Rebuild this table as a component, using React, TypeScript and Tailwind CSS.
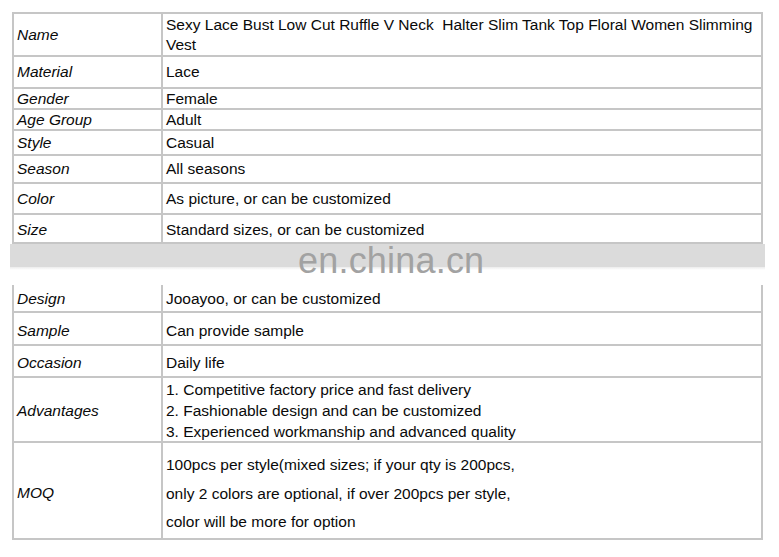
import React from "react";

type Row = {
  label: string;
  value: React.ReactNode;
  h: string;
  pad?: string;
};

const topRows: Row[] = [
  {
    label: "Name",
    value: (
      <span className="leading-[20px]">
        Sexy Lace Bust Low Cut Ruffle V Neck&nbsp; Halter Slim Tank Top Floral Women Slimming Vest
      </span>
    ),
    h: "h-[43px]",
  },
  { label: "Material", value: "Lace", h: "h-[32px]" },
  { label: "Gender", value: "Female", h: "h-[21px]" },
  { label: "Age Group", value: "Adult", h: "h-[21px]" },
  { label: "Style", value: "Casual", h: "h-[25px]" },
  { label: "Season", value: "All seasons", h: "h-[28px]" },
  { label: "Color", value: "As picture, or can be customized", h: "h-[31px]" },
  { label: "Size", value: "Standard sizes, or can be customized", h: "h-[27px]", pad: "pt-[3px]" },
];

const bottomRows: Row[] = [
  { label: "Design", value: "Jooayoo, or can be customized", h: "h-[28px]", pad: "pt-[2px]" },
  { label: "Sample", value: "Can provide sample", h: "h-[33px]", pad: "pt-[4px]" },
  { label: "Occasion", value: "Daily life", h: "h-[32px]", pad: "pt-[4px]" },
  {
    label: "Advantages",
    value: (
      <div className="leading-[21px]">
        <div>1. Competitive factory price and fast delivery</div>
        <div>2. Fashionable design and can be customized</div>
        <div>3. Experienced workmanship and advanced quality</div>
      </div>
    ),
    h: "h-[65px]",
    pad: "pt-[2px]",
  },
  {
    label: "MOQ",
    value: (
      <div className="leading-[28.5px] pt-[3px]">
        <div>100pcs per style(mixed sizes; if your qty is 200pcs,</div>
        <div>only 2 colors are optional, if over 200pcs per style,</div>
        <div>color will be more for option</div>
      </div>
    ),
    h: "h-[95px]",
    pad: "pt-[4px]",
  },
];

function SpecRow({ row, last }: { row: Row; last: boolean }) {
  const pad = row.pad ?? "";
  return (
    <div className={`flex ${row.h} ${last ? "" : "border-b-2 border-[#c6c6c6]"}`}>
      <div className={`w-[149px] shrink-0 border-r-2 border-[#c6c6c6] pl-[3px] flex items-center italic ${pad}`}>
        {row.label}
      </div>
      <div className={`flex-1 pl-[3px] pr-[2px] flex items-center ${pad}`}>{row.value}</div>
    </div>
  );
}

export default function App() {
  return (
    <div
      className="relative w-[779px] h-[557px] bg-white pt-[12px] text-[15.5px] leading-[18px] text-[#0a0a0a]"
      style={{ fontFamily: '"Liberation Sans", Arial, sans-serif' }}
    >
      <div className="ml-[12px] w-[751px] border-2 border-[#c6c6c6]">
        {topRows.map((r, i) => (
          <SpecRow key={r.label} row={r} last={i === topRows.length - 1} />
        ))}
      </div>

      {/* watermark strip */}
      <div className="ml-[10px] w-[755px] h-[23px] bg-[#dbdbdb]" />
      <div className="ml-[10px] w-[755px] h-[3px] bg-gradient-to-b from-[#ececec] to-white" />
      <div className="h-[15px]" />

      <div className="ml-[12px] w-[751px] border-x-2 border-b-2 border-[#c6c6c6]">
        {bottomRows.map((r, i) => (
          <SpecRow key={r.label} row={r} last={i === bottomRows.length - 1} />
        ))}
      </div>

      <div className="absolute left-[298px] top-[243px] text-[36px] leading-[36px] text-[#a2a2a2] tracking-[0.2px]">
        en.china.cn
      </div>
    </div>
  );
}
